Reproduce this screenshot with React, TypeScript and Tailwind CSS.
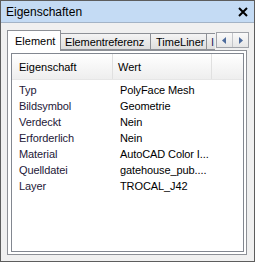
const rows: [string, string][] = [
  ["Typ", "PolyFace Mesh"],
  ["Bildsymbol", "Geometrie"],
  ["Verdeckt", "Nein"],
  ["Erforderlich", "Nein"],
  ["Material", "AutoCAD Color I..."],
  ["Quelldatei", "gatehouse_pub...."],
  ["Layer", "TROCAL_J42"],
];

export default function App() {
  return (
    <div className="w-[255px] h-[262px] border border-[#5d5d5d] bg-[#f0f0f0] flex flex-col text-[11px] text-black font-['Liberation_Sans',Arial,sans-serif] leading-none">
      {/* title bar */}
      <div className="h-[22px] shrink-0 bg-[#c4dbf4] border-b border-[#a3b3c6] flex items-center justify-between pl-[5px] pr-[6px]">
        <span className="text-[12px]">Eigenschaften</span>
        <svg width="10" height="10" viewBox="0 0 10 10">
          <path d="M1 1 L9 9 M9 1 L1 9" stroke="#000" strokeWidth="2" />
        </svg>
      </div>

      {/* tabs */}
      <div className="flex items-end h-[20px] mt-[7px] pl-[6px] shrink-0">
        <div className="relative z-10 h-[21px] -mb-px w-[54px] bg-white border border-b-0 border-[#8d9096] pl-[7px] pt-[5px]">
          Element
        </div>
        <div className="h-[17px] w-[91px] -ml-px border border-[#8d9096] bg-gradient-to-b from-[#f4f4f4] to-[#dedede] pl-[4px] pt-[3px] tracking-[-0.1px]">
          Elementreferenz
        </div>
        <div className="h-[17px] w-[57px] -ml-px border border-[#8d9096] bg-gradient-to-b from-[#f4f4f4] to-[#dedede] pl-[5px] pt-[3px]">
          TimeLiner
        </div>
        <div className="h-[17px] w-[9px] -ml-px overflow-hidden border border-r-0 border-[#8d9096] bg-gradient-to-b from-[#f4f4f4] to-[#dedede] pl-[4px] pt-[3px] text-[#2a1d5c]">
          I
        </div>
        <div className="self-start mt-[2px] ml-[1px] flex h-[16px] border border-[#a0a3a9] bg-[#f0f0f0]">
          <div className="w-[16px] flex items-center justify-center border-r border-[#c4c6ca] bg-gradient-to-b from-[#fafafa] to-[#e6e6e6]">
            <svg width="5" height="7" viewBox="0 0 5 7">
              <path d="M4 0 L0 3.5 L4 7 Z" fill="#4d6b9c" />
            </svg>
          </div>
          <div className="w-[15px] flex items-center justify-center bg-gradient-to-b from-[#fafafa] to-[#e6e6e6]">
            <svg width="5" height="7" viewBox="0 0 5 7">
              <path d="M1 0 L5 3.5 L1 7 Z" fill="#4d6b9c" />
            </svg>
          </div>
        </div>
      </div>

      {/* panel */}
      <div className="flex-1 ml-[6px] mr-[7px] mb-[6px] border border-[#8d9096] bg-white pt-[2px] pl-[3px] pr-[2px] pb-[2px] flex">
        <div className="flex-1 border border-[#828790] bg-white flex flex-col">
          <div className="h-[26px] flex bg-gradient-to-b from-white to-[#eeeeee] border-b border-[#e6e6e6]">
            <div className="w-[101px] border-r border-[#e0e0e0] pl-[7px] flex items-center pt-[2px]">Eigenschaft</div>
            <div className="w-[99px] border-r border-[#e0e0e0] pl-[5px] flex items-center pt-[2px]">Wert</div>
            <div className="flex-1" />
          </div>
          <div className="pt-[2px] flex flex-col">
            {rows.map(([k, v]) => (
              <div key={k} className="h-[16px] flex items-center tracking-[-0.1px]">
                <div className="w-[101px] pl-[7px] text-[#1e1838]">{k}</div>
                <div className="pl-[7px] whitespace-nowrap">{v}</div>
              </div>
            ))}
          </div>
        </div>
      </div>
    </div>
  );
}
